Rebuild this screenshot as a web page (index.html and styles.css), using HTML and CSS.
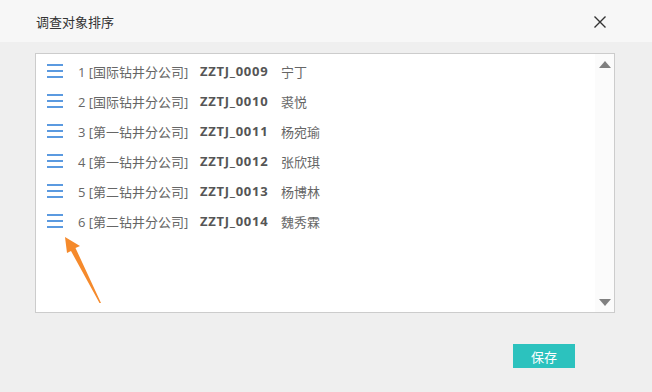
FILE: index.html
```html
<!DOCTYPE html>
<html lang="zh">
<head>
  <meta charset="UTF-8">
  <title>调查对象排序</title>
  <link rel="stylesheet" href="styles.css">
</head>
<body>
  <div class="dialog">
    <div class="dialog-head">
      <span class="dialog-title">调查对象排序</span>
      <svg class="close" width="14" height="14" viewBox="0 0 14 14">
        <path d="M1.5 1.5 L12.5 12.5 M12.5 1.5 L1.5 12.5" stroke="#333" stroke-width="1.4" fill="none"/>
      </svg>
    </div>

    <div class="dialog-body">
      <div class="list-box">
        <ul class="sort-list">
          <li><span class="handle"></span><span class="idx">1 [国际钻井分公司]</span><b class="code">ZZTJ_0009</b><span class="name">宁丁</span></li>
          <li><span class="handle"></span><span class="idx">2 [国际钻井分公司]</span><b class="code">ZZTJ_0010</b><span class="name">裘悦</span></li>
          <li><span class="handle"></span><span class="idx">3 [第一钻井分公司]</span><b class="code">ZZTJ_0011</b><span class="name">杨宛瑜</span></li>
          <li><span class="handle"></span><span class="idx">4 [第一钻井分公司]</span><b class="code">ZZTJ_0012</b><span class="name">张欣琪</span></li>
          <li><span class="handle"></span><span class="idx">5 [第二钻井分公司]</span><b class="code">ZZTJ_0013</b><span class="name">杨博林</span></li>
          <li><span class="handle"></span><span class="idx">6 [第二钻井分公司]</span><b class="code">ZZTJ_0014</b><span class="name">魏秀霖</span></li>
        </ul>
        <div class="scrollbar">
          <span class="arrow-up"></span>
          <span class="arrow-down"></span>
        </div>
      </div>

      <div class="actions">
        <button class="btn-save">保存</button>
      </div>
    </div>

    <!-- annotation arrow pointing at drag handle -->
    <svg class="hint-arrow" width="60" height="80" viewBox="0 0 60 80">
      <path d="M5 1 L20 10 L15.5 12 L41 67 L39.5 67 L11 15 L7 17 Z" fill="#f58a2c"/>
    </svg>
  </div>
</body>
</html>
```

FILE: styles.css
```css
* { box-sizing: border-box; }
html, body {
  margin: 0;
  padding: 0;
}
body {
  width: 652px;
  height: 392px;
  background: #efefef;
  font-family: "Open Sans", "Noto Sans CJK SC", sans-serif;
  color: #555;
  overflow: hidden;
}
.dialog {
  position: relative;
  height: 392px;
}
.dialog-head {
  height: 42px;
  background: #f7f7f7;
  display: flex;
  align-items: center;
  justify-content: space-between;
  padding: 0 45px 0 36px;
}
.dialog-title {
  font-family: "Noto Sans CJK SC", sans-serif;
  font-size: 13px;
  color: #333;
}
.close { display: block; margin-top: 2px; }
.dialog-body {
  padding: 11px 37px 0 35px;
}
.list-box {
  height: 260px;
  background: #fff;
  border: 1px solid #ccc;
  display: flex;
}
.sort-list {
  flex: 1;
  list-style: none;
  margin: 0;
  padding: 2px 0 0 11px;
}
.sort-list li {
  height: 30px;
  display: flex;
  align-items: center;
  font-size: 13px;
  white-space: nowrap;
}
.handle {
  width: 16px;
  height: 14px;
  border-top: 2px solid #5b9ae0;
  border-bottom: 2px solid #5b9ae0;
  position: relative;
  margin-right: 15px;
}
.handle::after {
  content: "";
  position: absolute;
  left: 0;
  right: 0;
  top: 4px;
  height: 2px;
  background: #5b9ae0;
}
.idx { width: 122px; color: #666; }
.code {
  width: 81px;
  color: #555;
  font-weight: bold;
  letter-spacing: 0.7px;
}
.name { color: #666; }
.scrollbar {
  width: 19px;
  background: #fbfbfb;
  display: flex;
  flex-direction: column;
  justify-content: space-between;
  align-items: center;
  padding: 7px 0 6px;
}
.arrow-up, .arrow-down {
  width: 0;
  height: 0;
  border-left: 6px solid transparent;
  border-right: 6px solid transparent;
}
.arrow-up { border-bottom: 7px solid #808080; }
.arrow-down { border-top: 7px solid #808080; }
.actions {
  display: flex;
  justify-content: flex-end;
  padding: 31px 40px 0 0;
}
.btn-save {
  width: 62px;
  height: 24px;
  border: none;
  background: #2cc2be;
  color: #fff;
  font-family: "Noto Sans CJK SC", sans-serif;
  font-size: 13px;
  padding: 0;
  cursor: pointer;
}
.hint-arrow {
  position: absolute;
  left: 60px;
  top: 236px;
}
```
